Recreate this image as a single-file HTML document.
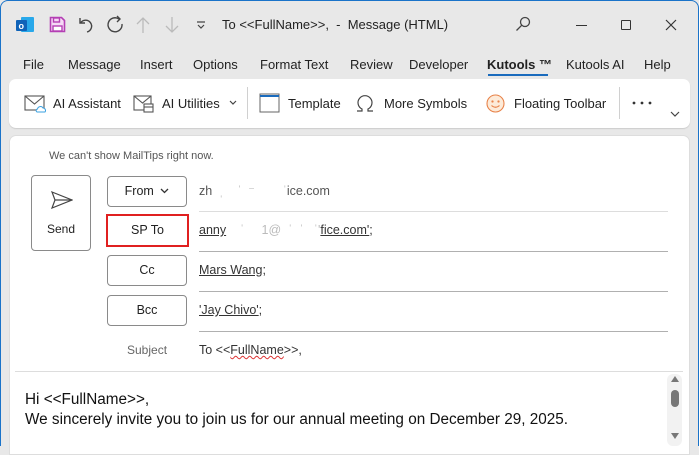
<!DOCTYPE html><html><head><style>
*{margin:0;padding:0;box-sizing:border-box}
body{width:699px;height:446px;overflow:hidden;background:#e8e8e8;font-family:"Liberation Sans",sans-serif;color:#222;position:relative}
.frame{position:absolute;left:0;top:0;width:699px;height:446px;border:1px solid #1a73c9;border-radius:8px 8px 0 0;border-bottom:none}
.a{position:absolute;white-space:nowrap}
.t{font-size:13px;color:#222}
.btn{position:absolute;border:1px solid #8a8a8a;border-radius:4px;background:#fff;font-size:12.5px;text-align:center;line-height:28px}
.ln{position:absolute;left:199px;width:469px;height:1px;background:#b0b0b0}
.u{font-size:12.5px;color:#333}
.u u{text-decoration:underline}
.g{color:#bbb}
</style></head><body>
<div class="frame"></div>
<svg class="a" style="left:15px;top:16px" width="20" height="18" viewBox="0 0 20 18"><rect x="6" y="1" width="13" height="15" rx="1" fill="#28a8ea"/><rect x="1" y="4" width="11" height="11" rx="1" fill="#0f63b8"/><text x="3.5" y="13" font-size="9" fill="#fff" font-family="Liberation Sans" font-weight="bold">o</text></svg>
<svg class="a" style="left:49px;top:16px" width="17" height="17" viewBox="0 0 17 17"><path d="M1.5 1.5h11l3 3v11h-14z" fill="#f5d9f5" stroke="#b43fb4" stroke-width="1.6"/><rect x="4.5" y="2" width="6" height="4" fill="none" stroke="#b43fb4" stroke-width="1.4"/><rect x="4" y="10" width="9" height="5" fill="#fff" stroke="#b43fb4" stroke-width="1.4"/></svg>
<svg class="a" style="left:78px;top:16px" width="18" height="18" viewBox="0 0 18 18" fill="none" stroke="#444" stroke-width="1.4"><path d="M2 2v5h5"/><path d="M2.5 7A6 6 0 1 1 9 16"/></svg>
<svg class="a" style="left:106px;top:15px" width="18" height="19" viewBox="0 0 18 19" fill="none" stroke="#444" stroke-width="1.4"><path d="M11 1l3 3-3 3"/><path d="M13 4A7 7 0 1 0 16 9"/></svg>
<svg class="a" style="left:136px;top:16px" width="14" height="18" viewBox="0 0 14 18" fill="none" stroke="#bbb" stroke-width="1.3"><path d="M7 17V2M1 8l6-6 6 6"/></svg>
<svg class="a" style="left:165px;top:16px" width="14" height="18" viewBox="0 0 14 18" fill="none" stroke="#bbb" stroke-width="1.3"><path d="M7 1v15M1 10l6 6 6-6"/></svg>
<svg class="a" style="left:196px;top:21px" width="10" height="8" viewBox="0 0 10 8" fill="none" stroke="#444" stroke-width="1.2"><path d="M1 1h8M2 4l3 3 3-3"/></svg>
<div class="a t" style="left:222px;top:17px">To &lt;&lt;FullName&gt;&gt;, &nbsp;- &nbsp;Message (HTML)</div>
<svg class="a" style="left:515px;top:16px" width="16" height="16" viewBox="0 0 16 16" fill="none" stroke="#444" stroke-width="1.3"><circle cx="10" cy="6" r="4.5"/><path d="M6.8 9.2L1.5 14.5"/></svg>
<div class="a" style="left:576px;top:25px;width:11px;height:1px;background:#333"></div>
<div class="a" style="left:621px;top:20px;width:10px;height:10px;border:1.2px solid #333;border-radius:1px"></div>
<svg class="a" style="left:665px;top:19px" width="12" height="12" viewBox="0 0 12 12" stroke="#333" stroke-width="1.2"><path d="M1 1l10 10M11 1L1 11"/></svg>
<div class="a t" style="left:23px;top:57px">File</div>
<div class="a t" style="left:68px;top:57px">Message</div>
<div class="a t" style="left:140px;top:57px">Insert</div>
<div class="a t" style="left:193px;top:57px">Options</div>
<div class="a t" style="left:260px;top:57px">Format Text</div>
<div class="a t" style="left:350px;top:57px">Review</div>
<div class="a t" style="left:409px;top:57px">Developer</div>
<div class="a t" style="left:487px;top:57px;font-weight:bold">Kutools ™</div>
<div class="a" style="left:488px;top:74px;width:60px;height:2px;background:#1a6bbd"></div>
<div class="a t" style="left:566px;top:57px">Kutools AI</div>
<div class="a t" style="left:644px;top:57px">Help</div>
<div class="a" style="left:9px;top:79px;width:681px;height:49px;background:#fff;border-radius:7px;box-shadow:0 1px 1px #ccc"></div>
<svg class="a" style="left:24px;top:94px" width="22" height="20" viewBox="0 0 22 20" fill="none"><rect x="1" y="2" width="19" height="14" stroke="#555" stroke-width="1.1"/><path d="M1 2l9.5 8L20 2" stroke="#555" stroke-width="1.1"/><path d="M13 18h8a2.5 2.5 0 0 0-2-4 3 3 0 0 0-5.5 1A1.6 1.6 0 0 0 13 18z" fill="#fff" stroke="#3aa0e0" stroke-width="1"/></svg>
<div class="a t" style="left:53px;top:96px">AI Assistant</div>
<svg class="a" style="left:133px;top:94px" width="22" height="20" viewBox="0 0 22 20" fill="none" stroke="#555" stroke-width="1.1"><rect x="1" y="2" width="17" height="14"/><path d="M1 2l8.5 7L18 2"/><rect x="11" y="10" width="9" height="8" fill="#fff"/><path d="M11 13h9"/></svg>
<div class="a t" style="left:162px;top:96px">AI Utilities</div>
<svg class="a" style="left:229px;top:100px" width="8" height="6" viewBox="0 0 8 6" fill="none" stroke="#444" stroke-width="1.2"><path d="M1 1l3 3 3-3"/></svg>
<div class="a" style="left:247px;top:87px;width:1px;height:32px;background:#d0d0d0"></div>
<svg class="a" style="left:259px;top:93px" width="21" height="20" viewBox="0 0 21 20" fill="none"><rect x="1" y="1" width="19" height="18" stroke="#666" stroke-width="1"/><path d="M1 3h19" stroke="#1a6bbd" stroke-width="2"/></svg>
<div class="a t" style="left:288px;top:96px">Template</div>
<svg class="a" style="left:355px;top:93px" width="20" height="20" viewBox="0 0 20 20" fill="none" stroke="#444" stroke-width="1.2"><path d="M2 18h5v-2A7 7 0 1 1 13 16v2h5"/></svg>
<div class="a t" style="left:384px;top:96px">More Symbols</div>
<svg class="a" style="left:486px;top:94px" width="19" height="19" viewBox="0 0 19 19" fill="none" stroke="#e8834a" stroke-width="1.1"><circle cx="9.5" cy="9.5" r="8.5" fill="#fdebd9"/><circle cx="6.5" cy="7.5" r=".6" fill="#e8834a"/><circle cx="12.5" cy="7.5" r=".6" fill="#e8834a"/><path d="M5.5 11.5q4 3.5 8 0"/></svg>
<div class="a t" style="left:514px;top:96px">Floating Toolbar</div>
<div class="a" style="left:619px;top:87px;width:1px;height:32px;background:#d0d0d0"></div>
<svg class="a" style="left:632px;top:101px" width="20" height="4" viewBox="0 0 20 4" fill="#333"><circle cx="2" cy="2" r="1.4"/><circle cx="10" cy="2" r="1.4"/><circle cx="18" cy="2" r="1.4"/></svg>
<svg class="a" style="left:670px;top:111px" width="10" height="6" viewBox="0 0 10 6" fill="none" stroke="#444" stroke-width="1.2"><path d="M1 1l4 4 4-4"/></svg>
<div class="a" style="left:9px;top:135px;width:681px;height:320px;background:#fff;border-radius:7px 7px 0 0;border:1px solid #ddd"></div>
<div class="a" style="left:49px;top:150px;font-size:11px;color:#555">We can't show MailTips right now.</div>
<div class="btn" style="left:31px;top:175px;width:60px;height:76px;line-height:normal">
<svg style="position:absolute;left:19px;top:15px" width="22" height="18" viewBox="0 0 22 18" fill="none" stroke="#444" stroke-width="1.2"><path d="M1 1l20 8-20 8 3-8z"/><path d="M4 9h17"/></svg>
<div style="position:absolute;top:46px;width:100%;font-size:12px">Send</div></div>
<div class="btn" style="left:107px;top:176px;width:80px;height:31px">From <svg width="9" height="6" viewBox="0 0 9 6" fill="none" stroke="#333" stroke-width="1.3" style="margin-left:3px;vertical-align:1px"><path d="M1 1l3.5 3.5L8 1"/></svg></div>
<div class="a" style="left:199px;top:183px;font-size:12.5px;color:#555">zh<span class="g">&nbsp; ˌ&nbsp; &nbsp; ˈ&nbsp; ⁻&nbsp; &nbsp; &nbsp; &nbsp; ˈ</span>ice.com</div>
<div class="ln" style="top:211px;background:#ddd"></div>
<div class="btn" style="left:106px;top:214px;width:83px;height:33px;border:2px solid #e02020;border-radius:0;line-height:29px">SP To</div>
<div class="a u" style="left:199px;top:223px"><u>anny</u><span class="g">&nbsp; &nbsp; ˈ&nbsp; &nbsp; &nbsp;1@&nbsp; ˈ&nbsp; ˈ&nbsp; &nbsp;ˈ'</span><u>fice.com'</u>;</div>
<div class="ln" style="top:251px"></div>
<div class="btn" style="left:107px;top:255px;width:80px;height:31px">Cc</div>
<div class="a u" style="left:199px;top:263px"><u>Mars Wang</u>;</div>
<div class="ln" style="top:291px"></div>
<div class="btn" style="left:107px;top:295px;width:80px;height:31px">Bcc</div>
<div class="a u" style="left:199px;top:303px"><u>'Jay Chivo'</u>;</div>
<div class="ln" style="top:331px"></div>
<div class="a" style="left:127px;top:343px;font-size:12px;color:#666">Subject</div>
<div class="a" style="left:199px;top:343px;font-size:12.5px;color:#333">To &lt;&lt;<span style="text-decoration:underline wavy #d33;text-decoration-thickness:1px">FullName</span>&gt;&gt;,</div>
<div class="a" style="left:15px;top:371px;width:668px;height:1px;background:#ddd"></div>
<div class="a" style="left:25px;top:390px;font-size:15.3px;color:#111;line-height:20px">Hi &lt;&lt;FullName&gt;&gt;,<br>We sincerely invite you to join us for our annual meeting on December 29, 2025.</div>
<div class="a" style="left:667px;top:374px;width:15px;height:72px;background:#f2f2f2;border-radius:6px"></div>
<div class="a" style="left:671px;top:376px;width:0;height:0;border-left:4px solid transparent;border-right:4px solid transparent;border-bottom:6px solid #777"></div>
<div class="a" style="left:671px;top:390px;width:8px;height:17px;background:#777;border-radius:4px"></div>
<div class="a" style="left:671px;top:433px;width:0;height:0;border-left:4px solid transparent;border-right:4px solid transparent;border-top:6px solid #777"></div>
</body></html>
